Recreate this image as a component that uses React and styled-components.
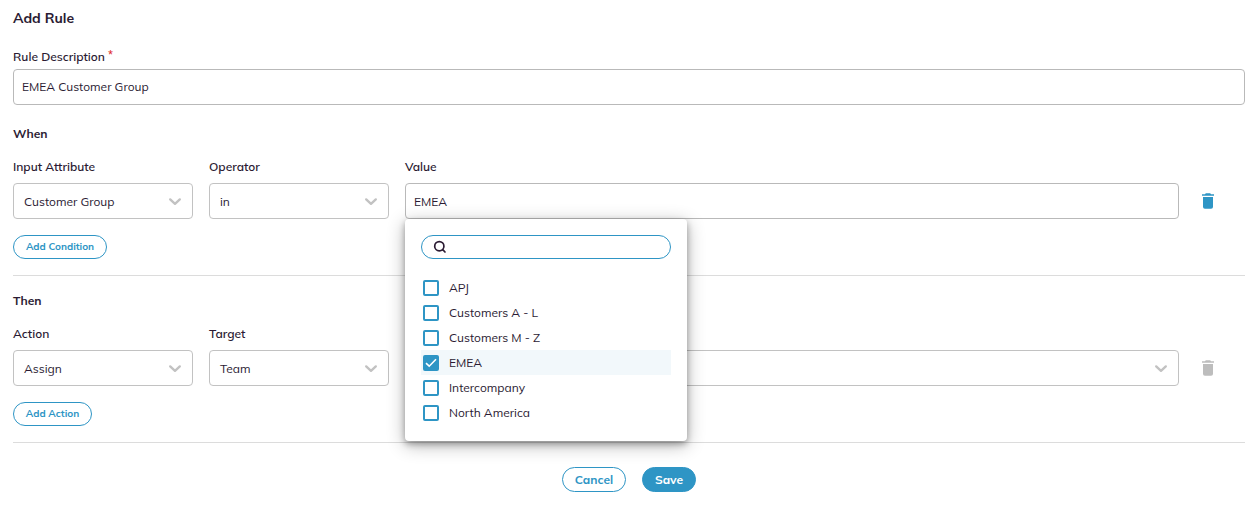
import React, { useState } from 'react';
import styled, { createGlobalStyle } from 'styled-components';

const GlobalStyle = createGlobalStyle`
  * {
    box-sizing: border-box;
  }

  body {
    margin: 0;
    background-color: #fff;
    color: #2b1b33;
    font-family: Mulish, Muli, Lato, 'Open Sans', sans-serif;
    font-size: 12px;
    line-height: 20px;
  }
`;

const Page = styled.main`
  padding: 8px 12px 0 13px;
`;

const Title = styled.h1`
  margin: 0 0 19px;
  font-size: 14px;
  font-weight: 700;
  line-height: 20px;
`;

const SectionTitle = styled.h2`
  margin: 0 0 13px;
  padding-top: 1px;
  font-size: 12px;
  font-weight: 700;
  line-height: 20px;
`;

const Label = styled.div`
  height: 20px;
  margin-bottom: ${({ $gap }) => $gap || '6px'};
  font-weight: 600;
`;

const Required = styled.span`
  position: relative;
  top: -2px;
  margin-left: 3px;
  color: #e02b2b;
  font-size: 11px;
  line-height: 0;
`;

const Section = styled.section`
  padding-bottom: 16px;
  margin-bottom: ${({ $gap }) => $gap};
  border-bottom: 1px solid #dcdcdc;
`;

const Row = styled.div`
  display: flex;
  align-items: flex-end;
  gap: 16px;
  margin-bottom: 16px;
`;

const Column = styled.div`
  position: relative;
  width: 180px;
`;

const WideColumn = styled(Column)`
  flex: 1;
  width: auto;
`;

const Field = styled.div`
  display: flex;
  align-items: center;
  justify-content: space-between;
  height: 36px;
  padding: 0 8px;
  border: 1px solid #b9b9b9;
  border-radius: 4px;
  background-color: #fff;
`;

const DescriptionField = styled(Field)`
  margin-bottom: 18px;
`;

const ValueField = styled(Field)`
  padding-top: 2px;
`;

const SelectField = styled(Field)`
  padding: 1px 10px 0;
  border-color: #c2c2c2;
`;

const TrashButton = styled.button`
  display: flex;
  align-items: center;
  justify-content: center;
  width: 26px;
  height: 36px;
  margin-right: 24px;
  padding: 0;
  border: none;
  background: none;
  color: ${({ disabled }) => (disabled ? '#bdbdbd' : '#2e95c5')};
`;

const Button = styled.button`
  display: block;
  width: ${({ $width }) => $width};
  height: ${({ $small }) => ($small ? '24px' : '25px')};
  padding: ${({ $small }) => ($small ? '0 0 2px' : '0')};
  border: 1px solid #2e95c5;
  border-radius: 13px;
  background-color: ${({ $primary }) => ($primary ? '#2e95c5' : '#fff')};
  color: ${({ $primary }) => ($primary ? '#fff' : '#2e95c5')};
  font-family: inherit;
  font-size: ${({ $small }) => ($small ? '10px' : '12px')};
  font-weight: 700;
  cursor: pointer;
`;

const Footer = styled.footer`
  display: flex;
  justify-content: center;
  gap: 16px;
`;

const Dropdown = styled.div`
  position: absolute;
  top: 100%;
  left: 0;
  z-index: 1;
  width: 282px;
  height: 222px;
  padding: 16px;
  border-radius: 4px;
  background-color: #fff;
  box-shadow: 0 4px 18px rgba(0, 0, 0, 0.3), 0 3px 6px rgba(0, 0, 0, 0.3);
`;

const SearchBox = styled.div`
  display: flex;
  align-items: center;
  height: 24px;
  margin-bottom: 16px;
  padding-left: 11px;
  border: 1px solid #2e95c5;
  border-radius: 12px;
`;

const Option = styled.div`
  display: flex;
  align-items: center;
  gap: 10px;
  height: 25px;
  padding-left: 2px;
  background-color: ${({ $checked }) => ($checked ? '#f2f8fb' : 'transparent')};
  cursor: pointer;
`;

const Checkbox = styled.span`
  display: flex;
  align-items: center;
  justify-content: center;
  width: 16px;
  height: 16px;
  border: 2px solid #2e95c5;
  border-radius: 2px;
  background-color: ${({ $checked }) => ($checked ? '#2e95c5' : '#fff')};
`;

const options = [
  'APJ',
  'Customers A - L',
  'Customers M - Z',
  'EMEA',
  'Intercompany',
  'North America',
];

const Chevron = () => (
  <svg width="14" height="10" viewBox="0 0 14 10" fill="none">
    <path d="M2.2 2.4L7 6.8L11.8 2.4" stroke="#c2c2c2" strokeWidth="2.4" strokeLinecap="round" strokeLinejoin="round" />
  </svg>
);

const TrashIcon = () => (
  <svg width="12" height="16" viewBox="0 0 12 16" fill="currentColor">
    <path d="M0 1.2H3L3.8 0.3H8.2L9 1.2H12V2.8H0Z" />
    <path d="M1 4H11V13.8Q11 15.7 9.1 15.7H2.9Q1 15.7 1 13.8Z" />
  </svg>
);

const SearchIcon = () => (
  <svg width="14" height="14" viewBox="0 0 14 14" fill="none" stroke="#2b1b33" strokeWidth="1.7" strokeLinecap="round">
    <circle cx="6.3" cy="6.2" r="4.6" />
    <path d="M9.7 9.7L12 12" />
  </svg>
);

const CheckIcon = () => (
  <svg width="12" height="10" viewBox="0 0 12 10" fill="none">
    <path d="M1 5.2L4.2 8.2L11 1.3" stroke="#fff" strokeWidth="1.6" />
  </svg>
);

const Select = ({ label, value }) => (
  <Column>
    <Label>{label}</Label>
    <SelectField>
      <span>{value}</span>
      <Chevron />
    </SelectField>
  </Column>
);

const App = () => {
  const [selected, setSelected] = useState(['EMEA']);

  const toggle = (name) => {
    setSelected(
      selected.includes(name) ? selected.filter((item) => item !== name) : [...selected, name]
    );
  };

  return (
    <>
      <GlobalStyle />
      <Page>
        <Title>Add Rule</Title>
        <Label $gap="2px">
          Rule Description<Required>*</Required>
        </Label>
        <DescriptionField>EMEA Customer Group</DescriptionField>

        <Section $gap="14px">
          <SectionTitle>When</SectionTitle>
          <Row>
            <Select label="Input Attribute" value="Customer Group" />
            <Select label="Operator" value="in" />
            <WideColumn>
              <Label>Value</Label>
              <ValueField>{selected.join(', ')}</ValueField>
              <Dropdown>
                <SearchBox>
                  <SearchIcon />
                </SearchBox>
                {options.map((name) => (
                  <Option
                    key={name}
                    $checked={selected.includes(name)}
                    onClick={() => toggle(name)}
                  >
                    <Checkbox $checked={selected.includes(name)}>
                      {selected.includes(name) && <CheckIcon />}
                    </Checkbox>
                    {name}
                  </Option>
                ))}
              </Dropdown>
            </WideColumn>
            <TrashButton aria-label="Delete condition">
              <TrashIcon />
            </TrashButton>
          </Row>
          <Button $small $width="94px">Add Condition</Button>
        </Section>

        <Section $gap="24px">
          <SectionTitle>Then</SectionTitle>
          <Row>
            <Select label="Action" value="Assign" />
            <Select label="Target" value="Team" />
            <WideColumn>
              <SelectField>
                <span />
                <Chevron />
              </SelectField>
            </WideColumn>
            <TrashButton aria-label="Delete action" disabled>
              <TrashIcon />
            </TrashButton>
          </Row>
          <Button $small $width="79px">Add Action</Button>
        </Section>

        <Footer>
          <Button $width="64px">Cancel</Button>
          <Button $primary $width="54px">Save</Button>
        </Footer>
      </Page>
    </>
  );
};

export default App;
